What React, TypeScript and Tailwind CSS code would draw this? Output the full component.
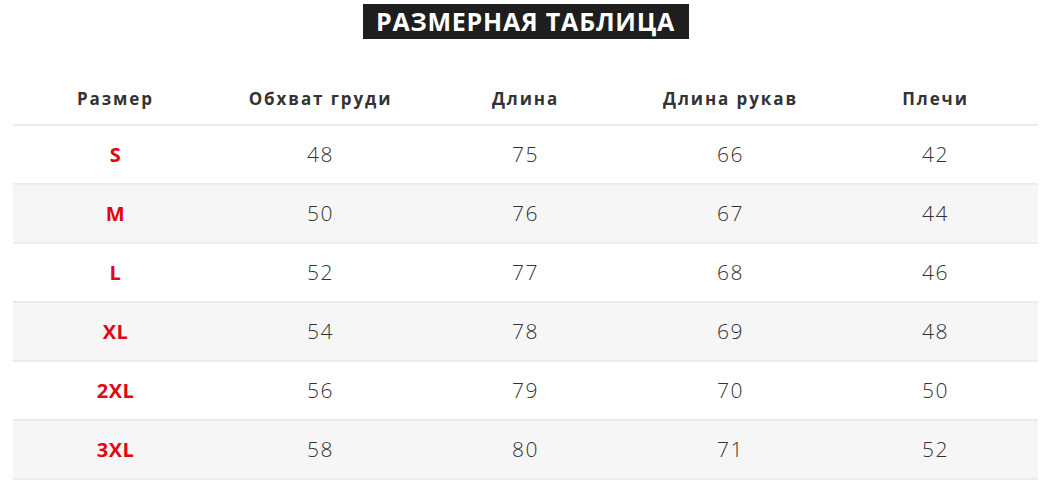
import React from "react";

const rows = [
  ["S", "48", "75", "66", "42"],
  ["M", "50", "76", "67", "44"],
  ["L", "52", "77", "68", "46"],
  ["XL", "54", "78", "69", "48"],
  ["2XL", "56", "79", "70", "50"],
  ["3XL", "58", "80", "71", "52"],
];

const heads = ["Размер", "Обхват груди", "Длина", "Длина рукав", "Плечи"];

export default function App() {
  return (
    <div className="w-[1051px] h-[498px] bg-white overflow-hidden font-['Open_Sans',sans-serif]">
      <div className="flex justify-center pt-[4px]">
        <div className="bg-[#1e1e1e] text-white font-bold uppercase w-[326px] h-[35px] flex items-center justify-center text-[25px] tracking-[0.8px] leading-none">
          РАЗМЕРНАЯ ТАБЛИЦА
        </div>
      </div>
      <div className="mx-[13px] mt-[37px]">
        <div className="grid grid-cols-5 h-[50px] items-center border-b-2 border-[#ececec]">
          {heads.map((h) => (
            <div key={h} className="text-center font-bold text-[17px] tracking-[1.9px] text-[#333] pb-[2px]">
              {h}
            </div>
          ))}
        </div>
        {rows.map((r, i) => (
          <div
            key={r[0]}
            className={`grid grid-cols-5 h-[59px] items-center border-b-2 border-[#ececec] ${i % 2 === 1 ? "bg-[#f6f6f6]" : "bg-white"}`}
          >
            {r.map((c, j) =>
              j === 0 ? (
                <div key={j} className="text-center font-bold text-[20px] tracking-[0.5px] text-[#e30613]">
                  {c}
                </div>
              ) : (
                <div key={j} className="text-center font-light text-[21px] tracking-[1.5px] text-[#333]">
                  {c}
                </div>
              )
            )}
          </div>
        ))}
      </div>
    </div>
  );
}
